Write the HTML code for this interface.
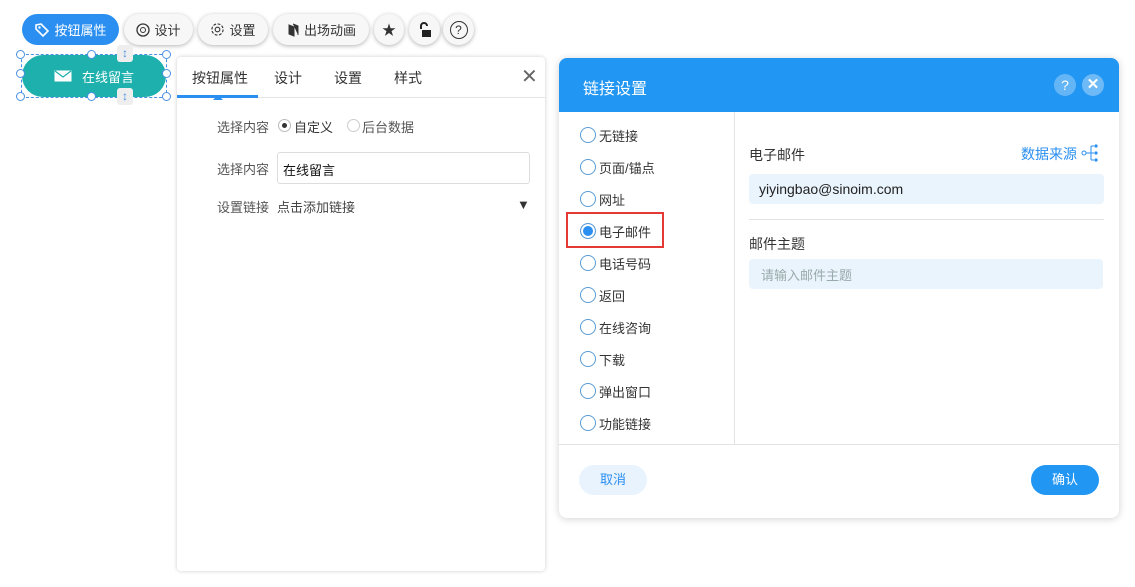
<!DOCTYPE html>
<html><head><meta charset="utf-8"><style>
*{box-sizing:border-box;margin:0;padding:0}
body{width:1135px;height:587px;background:#fff;font-family:"Liberation Sans","Noto Sans CJK SC",sans-serif;font-size:13px;color:#333;position:relative;overflow:hidden}
.a{position:absolute}
.tb{position:absolute;top:14px;height:31px;border-radius:16px;background:#f7f7f7;box-shadow:0 1px 4px rgba(0,0,0,.3);display:flex;align-items:center;justify-content:center;font-size:13px;color:#333;gap:4px}
.h{position:absolute;width:9px;height:9px;border:1px solid #4a90e2;border-radius:50%;background:#fff}
.rad{position:absolute;left:580px;width:16px;height:16px;border:1.5px solid #5b9bd5;border-radius:50%}
.rl{position:absolute;left:599px;font-size:13px;color:#333}
</style></head><body>
<div class="tb" style="left:22px;width:97px;background:#2a8ff0;color:#fff;box-shadow:none"><svg width="16" height="16" viewBox="0 0 16 16"><path d="M2 3l5-1 7 7-5 5-7-7z" fill="none" stroke="#fff" stroke-width="1.6"/><circle cx="5.5" cy="5.5" r="1.2" fill="#fff"/></svg>按钮属性</div>
<div class="tb" style="left:124px;width:69px"><svg width="14" height="14" viewBox="0 0 14 14"><circle cx="7" cy="7" r="6" fill="none" stroke="#333" stroke-width="1.3"/><circle cx="7" cy="7" r="2.5" fill="none" stroke="#333"/></svg>设计</div>
<div class="tb" style="left:198px;width:70px"><svg width="15" height="15" viewBox="0 0 16 16"><circle cx="8" cy="8" r="2.5" fill="none" stroke="#333" stroke-width="1.2"/><circle cx="8" cy="8" r="6" fill="none" stroke="#333" stroke-width="1.2" stroke-dasharray="3 1.7"/></svg>设置</div>
<div class="tb" style="left:273px;width:96px"><svg width="14" height="14" viewBox="0 0 14 14"><path d="M3 2l5 2v9l-5-2z M7 1l5 2v9" fill="#333" stroke="#333"/></svg>出场动画</div>
<div class="tb" style="left:374px;width:30px;font-size:14px">★</div>
<div class="tb" style="left:409px;width:31px"><svg width="14" height="16" viewBox="0 0 14 16"><path d="M3 7V4a3 3 0 016 0" fill="none" stroke="#222" stroke-width="2"/><rect x="4" y="8" width="9" height="7" fill="#222"/></svg></div>
<div class="tb" style="left:443px;width:31px"><div style="width:18px;height:18px;border:1.3px solid #333;border-radius:50%;font-size:12px;line-height:16px;text-align:center">?</div></div>

<div class="a" style="left:21px;top:54px;width:146px;height:44px;border:1px dashed #4a90e2"></div>
<div class="a" style="left:22px;top:55px;width:144px;height:42px;border-radius:21px;background:#1db0ac;color:#fff;font-size:13px;display:flex;align-items:center;justify-content:center;gap:10px"><svg width="18" height="12" viewBox="0 0 18 12"><rect x=".5" y=".5" width="17" height="11" fill="#fff"/><path d="M1 1l8 6 8-6" fill="none" stroke="#1db0ac" stroke-width="1.2"/></svg>在线留言</div>
<div class="h" style="left:16px;top:50px"></div><div class="h" style="left:87px;top:50px"></div><div class="h" style="left:162px;top:50px"></div>
<div class="h" style="left:16px;top:69px"></div><div class="h" style="left:162px;top:69px"></div>
<div class="h" style="left:16px;top:92px"></div><div class="h" style="left:87px;top:92px"></div><div class="h" style="left:162px;top:92px"></div>
<div class="a" style="left:117px;top:45px;width:16px;height:17px;background:#eee;border-radius:3px;color:#4a90e2;font-size:12px;text-align:center;line-height:17px">↕</div>
<div class="a" style="left:117px;top:88px;width:16px;height:17px;background:#eee;border-radius:3px;color:#4a90e2;font-size:12px;text-align:center;line-height:17px">↕</div>

<div class="a" style="left:177px;top:57px;width:368px;height:514px;background:#fff;border-radius:4px;box-shadow:0 0 4px rgba(0,0,0,.2)">
<div class="a" style="left:0;top:40px;width:368px;height:1px;background:#e5e5e5"></div>
<div class="a" style="left:0;top:38px;width:81px;height:3px;background:#2a8ff0"></div>
<div class="a" style="left:36px;top:33px;width:0;height:0;border:5px solid transparent;border-bottom-color:#2a8ff0"></div>
<div class="a" style="left:15px;top:11px;font-size:14px">按钮属性</div>
<div class="a" style="left:97px;top:11px;font-size:14px">设计</div>
<div class="a" style="left:157px;top:11px;font-size:14px">设置</div>
<div class="a" style="left:217px;top:11px;font-size:14px">样式</div>
<div class="a" style="left:344px;top:7px;font-size:20px;color:#666">✕</div>
<div class="a" style="left:40px;top:60px;color:#555">选择内容</div>
<div class="a" style="left:101px;top:62px;width:13px;height:13px;border:1px solid #bbb;border-radius:50%"><div style="width:5px;height:5px;background:#333;border-radius:50%;margin:3px"></div></div>
<div class="a" style="left:117px;top:60px">自定义</div>
<div class="a" style="left:170px;top:62px;width:13px;height:13px;border:1px solid #ccc;border-radius:50%"></div>
<div class="a" style="left:185px;top:60px;color:#555">后台数据</div>
<div class="a" style="left:40px;top:102px;color:#555">选择内容</div>
<div class="a" style="left:100px;top:95px;width:253px;height:32px;border:1px solid #ddd;border-radius:3px;padding:7px 5px;color:#111">在线留言</div>
<div class="a" style="left:40px;top:140px;color:#555">设置链接</div>
<div class="a" style="left:100px;top:140px;color:#444">点击添加链接</div>
<div class="a" style="left:340px;top:140px;font-size:13px;color:#333">▼</div>
</div>

<div class="a" style="left:559px;top:58px;width:560px;height:460px;background:#fff;border-radius:8px;box-shadow:0 1px 8px rgba(0,0,0,.18);overflow:hidden">
<div class="a" style="left:0;top:0;width:560px;height:54px;background:#2196f3"></div>
<div class="a" style="left:24px;top:17px;color:#fff;font-size:16px">链接设置</div>
<div class="a" style="left:495px;top:16px;width:22px;height:22px;border-radius:50%;background:rgba(255,255,255,.3);color:#fff;text-align:center;line-height:22px;font-size:14px">?</div>
<div class="a" style="left:523px;top:16px;width:22px;height:22px;border-radius:50%;background:rgba(255,255,255,.35);color:#fff;text-align:center;line-height:22px;font-size:15px;font-weight:bold">✕</div>
<div class="a" style="left:175px;top:54px;width:1px;height:332px;background:#e3e3e3"></div>
<div class="a" style="left:0;top:386px;width:560px;height:1px;background:#e3e3e3"></div>
<div class="a" style="left:190px;top:87px;font-size:14px">电子邮件</div>
<div class="a" style="left:462px;top:86px;font-size:14px;color:#2a8ff0">数据来源</div>
<svg class="a" style="left:522px;top:85px" width="18" height="20" viewBox="0 0 18 20"><circle cx="3" cy="10" r="2" fill="none" stroke="#2a8ff0"/><path d="M5 10h5M10 3v14M10 3h3M10 10h3M10 17h3" stroke="#2a8ff0" fill="none"/><circle cx="15" cy="3" r="1.6" fill="#2a8ff0"/><circle cx="15" cy="10" r="1.6" fill="#2a8ff0"/><circle cx="15" cy="17" r="1.6" fill="#2a8ff0"/></svg>
<div class="a" style="left:190px;top:116px;width:355px;height:30px;background:#eaf4fd;border-radius:4px;padding:7px 10px;font-size:14px;color:#222">yiyingbao@sinoim.com</div>
<div class="a" style="left:190px;top:161px;width:355px;height:1px;background:#e3e3e3"></div>
<div class="a" style="left:190px;top:176px;font-size:14px">邮件主题</div>
<div class="a" style="left:190px;top:201px;width:354px;height:30px;background:#eaf4fd;border-radius:4px;padding:6px 12px;font-size:13px;color:#9aa">请输入邮件主题</div>
<div class="a" style="left:20px;top:407px;width:68px;height:30px;border-radius:15px;background:#e8f3fd;color:#2a8ff0;text-align:center;line-height:30px">取消</div>
<div class="a" style="left:472px;top:407px;width:68px;height:30px;border-radius:15px;background:#2196f3;color:#fff;text-align:center;line-height:30px">确认</div>
</div>

<div class="rad" style="top:127px"></div><div class="rl" style="top:126px">无链接</div>
<div class="rad" style="top:159px"></div><div class="rl" style="top:158px">页面/锚点</div>
<div class="rad" style="top:191px"></div><div class="rl" style="top:190px">网址</div>
<div class="a" style="left:566px;top:212px;width:98px;height:36px;border:2px solid #e53935"></div>
<div class="rad" style="top:223px;background:#2a8ff0;box-shadow:inset 0 0 0 2px #fff;border-color:#5b9bd5"></div><div class="rl" style="top:222px">电子邮件</div>
<div class="rad" style="top:255px"></div><div class="rl" style="top:254px">电话号码</div>
<div class="rad" style="top:287px"></div><div class="rl" style="top:286px">返回</div>
<div class="rad" style="top:319px"></div><div class="rl" style="top:318px">在线咨询</div>
<div class="rad" style="top:351px"></div><div class="rl" style="top:350px">下载</div>
<div class="rad" style="top:383px"></div><div class="rl" style="top:382px">弹出窗口</div>
<div class="rad" style="top:415px"></div><div class="rl" style="top:414px">功能链接</div>
</body></html>
